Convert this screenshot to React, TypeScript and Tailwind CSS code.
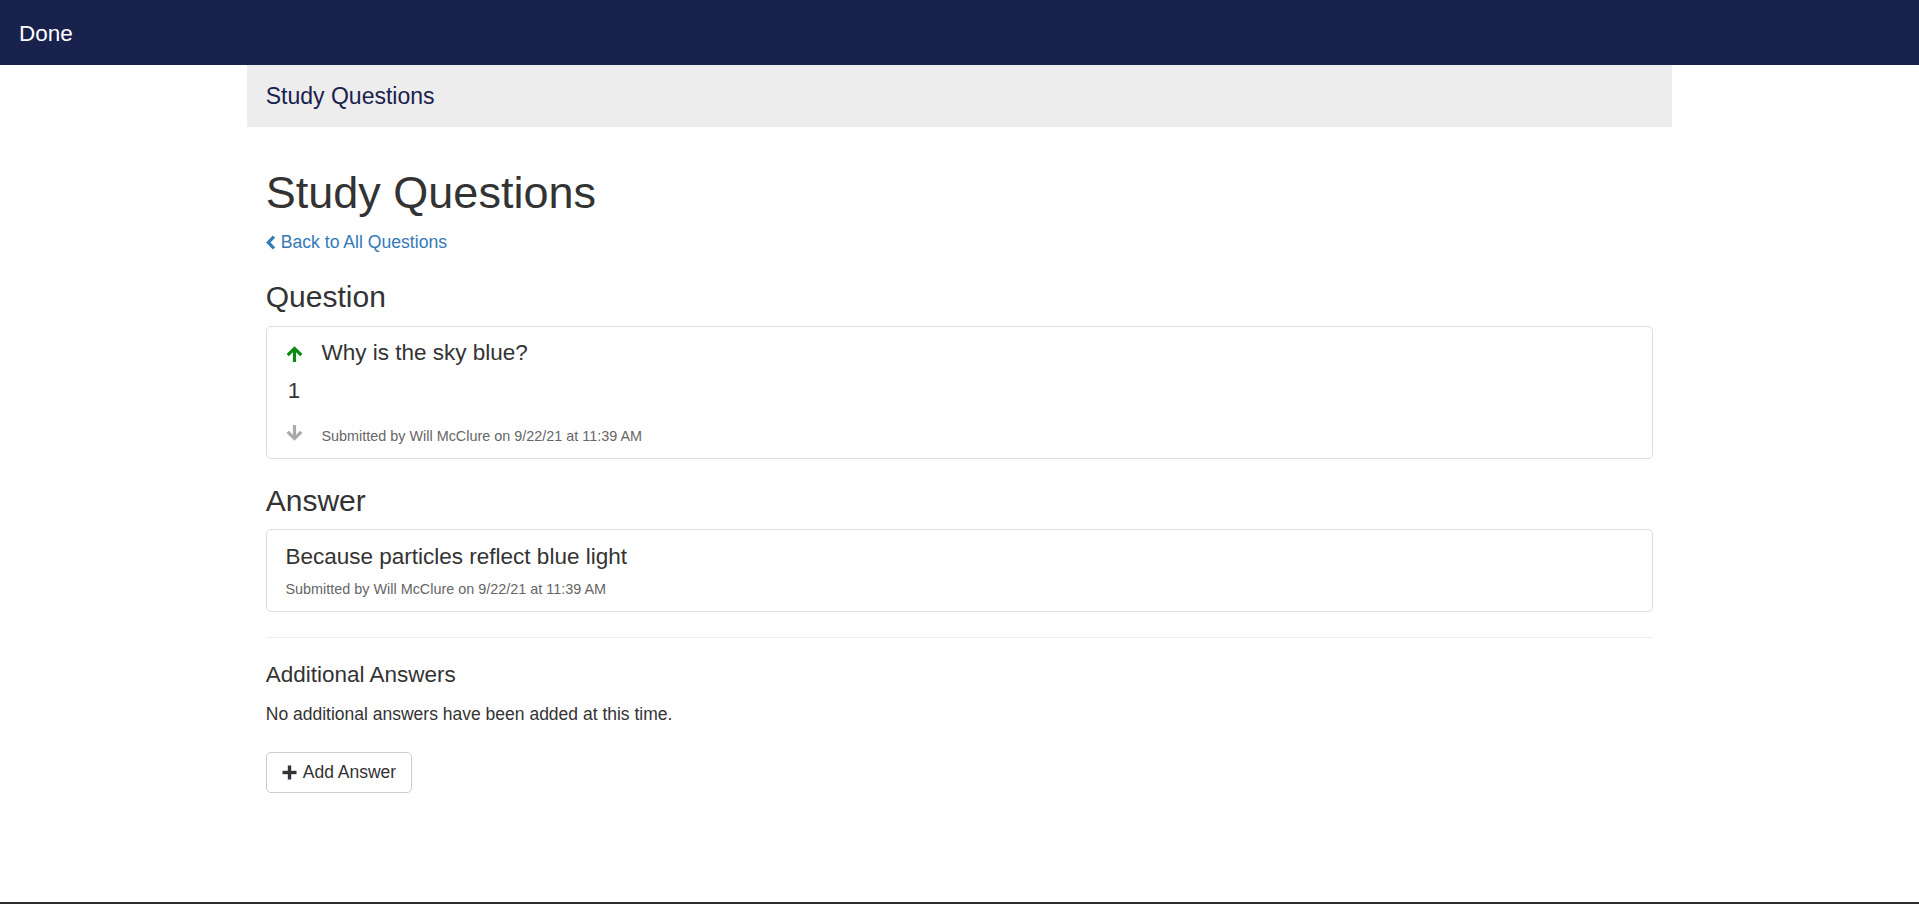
const ArrowIcon = ({ down, className }: { down?: boolean; className?: string }) => (
  <svg
    width="17"
    height="16"
    viewBox="0 0 17 16"
    className={`${down ? "rotate-180" : ""} ${className ?? ""}`}
  >
    <path d="M8.5 16V3.5" stroke="currentColor" strokeWidth="3.2" fill="none" />
    <path d="M1.7 9.2L8.5 2.4l6.8 6.8" stroke="currentColor" strokeWidth="3.2" fill="none" />
  </svg>
);

const ChevronLeft = () => (
  <svg width="10" height="15" viewBox="0 0 10 15" className="mr-[5px] shrink-0">
    <path d="M8 1.6L2.3 7.5 8 13.4" stroke="currentColor" strokeWidth="3.2" fill="none" />
  </svg>
);

const PlusIcon = () => (
  <svg width="15" height="15" viewBox="0 0 15 15" className="mr-[6px] shrink-0">
    <rect x="5.8" y="0.5" width="3.4" height="14" fill="currentColor" />
    <rect x="0.5" y="5.8" width="14" height="3.4" fill="currentColor" />
  </svg>
);

const Submitted = ({ className }: { className?: string }) => (
  <div className={`text-[14.4px] leading-[20px] text-[#666] ${className ?? ""}`}>
    Submitted by Will McClure on 9/22/21 at 11:39 AM
  </div>
);

export default function App() {
  return (
    <div className="h-[904px] flex flex-col overflow-hidden bg-white text-[#333] font-['Liberation_Sans',Arial,sans-serif]">
      {/* Top bar */}
      <header className="h-[65px] shrink-0 bg-[#19214d] flex items-center px-[19px] pt-[4px]">
        <span className="text-white text-[22.5px] leading-none">Done</span>
      </header>

      <main className="flex-1">
        <div className="w-[1425px] mx-auto">
          <div className="h-[62px] bg-[#ededed] flex items-center px-[18.75px]">
            <span className="text-[#19214d] text-[23px] leading-none">Study Questions</span>
          </div>

          <div className="px-[18.75px]">
            <h1 className="mt-[41px] mb-[12px] text-[45px] leading-[49.5px]">Study Questions</h1>

            <a className="flex items-center h-[25px] text-[17.6px] text-[#337ab7] cursor-pointer">
              <ChevronLeft />
              Back to All Questions
            </a>

            <h3 className="mt-[25px] mb-[13px] text-[30px] leading-[33px]">Question</h3>

            {/* Question card */}
            <div className="border border-[#ddd] rounded-[5px] px-[18.75px] pt-[14.5px] pb-[12.5px] flex">
              <div className="w-[17px] mr-[19px] flex flex-col items-center">
                <div className="h-[26px] flex items-center text-[#0a8a12]">
                  <ArrowIcon />
                </div>
                <div className="mt-[12px] text-[22.5px] leading-[24.75px]">1</div>
                <div className="mt-[16px] h-[26px] flex items-center text-[#aaa]">
                  <ArrowIcon down />
                </div>
              </div>
              <div className="flex-1 flex flex-col justify-between">
                <div className="text-[22.5px] leading-[24.75px]">Why is the sky blue?</div>
                <Submitted />
              </div>
            </div>

            <h3 className="mt-[24.5px] mb-[12.5px] text-[30px] leading-[33px]">Answer</h3>

            {/* Answer card */}
            <div className="border border-[#ddd] rounded-[5px] px-[18.75px] pt-[15px] pb-[12.5px]">
              <div className="text-[22.5px] leading-[24.75px]">Because particles reflect blue light</div>
              <Submitted className="mt-[8.5px]" />
            </div>

            <hr className="mt-[25px] border-0 border-t border-[#eee]" />

            <h4 className="mt-[25px] mb-[14px] text-[22.5px] leading-[24.75px]">Additional Answers</h4>
            <p className="text-[17.5px] leading-[25px]">No additional answers have been added at this time.</p>

            <button className="mt-[25px] h-[41px] w-fit whitespace-nowrap border border-[#ccc] rounded-[5px] bg-white flex items-center px-[15px] text-[17.5px] text-[#333]">
              <PlusIcon />
              Add Answer
            </button>
          </div>
        </div>
      </main>

      <div className="h-[2px] shrink-0 bg-[#2b2b2b]" />
    </div>
  );
}
